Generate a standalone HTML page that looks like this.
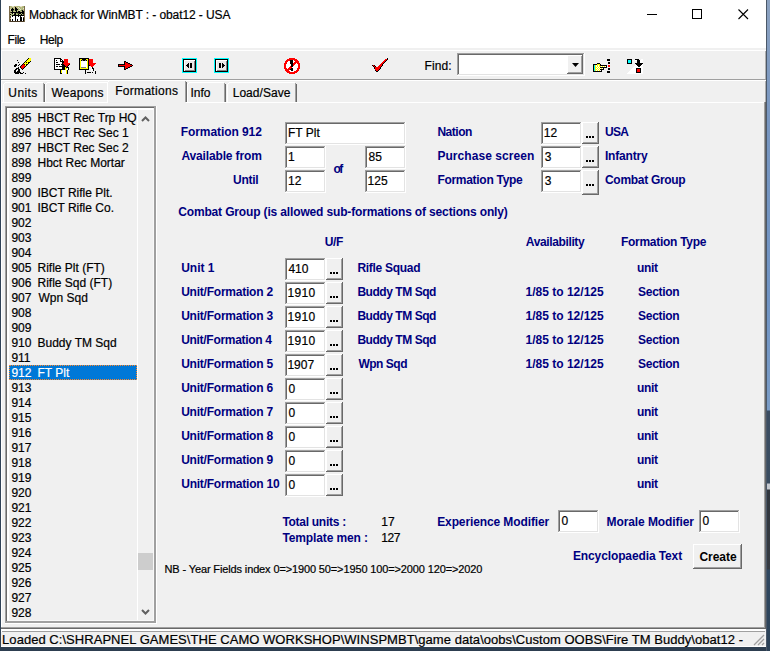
<!DOCTYPE html>
<html><head><meta charset="utf-8"><style>
html,body{margin:0;padding:0;width:770px;height:651px;overflow:hidden;background:#f0f0f0}
#w{position:relative;width:770px;height:651px;overflow:hidden}
#w div, #w span, #w svg{position:absolute}
.t,.b{font-family:"Liberation Sans",sans-serif;font-size:12px;line-height:20px;white-space:pre;color:#000}
.t{-webkit-text-stroke:0.2px currentColor}
.b{-webkit-text-stroke:0}
.b{font-weight:bold;color:#000080}
.k{color:#000}
.w{color:#fff}
.s{font-size:11px}
.st{font-size:13px}
</style></head><body><div id="w">
<div style="left:0px;top:0px;width:770px;height:651px;background:#f0f0f0;"></div>
<div style="left:766px;top:0;width:4px;height:651px;background:linear-gradient(#8ca2c0 0px,#7896c0 120px,#7094c4 300px,#7a9cc6 410px,#3b4d62 411px,#3a4c60 483px,#c5c9d0 484px,#c5c9d0 489px,#30363e 490px,#363b42 569px,#2f4760 570px,#2c4258 651px)"></div>
<div style="left:766px;top:0px;width:1px;height:651px;background:#4b5868;"></div>
<div style="left:0px;top:0px;width:1px;height:651px;background:#2f4257;"></div>
<div style="left:0px;top:647px;width:766px;height:4px;background:#2d3e50;"></div>
<div style="left:1px;top:0px;width:765px;height:48px;background:#ffffff;"></div>
<div style="left:1px;top:48px;width:765px;height:2px;background:#f0f0f0;"></div>
<div style="left:1px;top:50px;width:765px;height:1px;background:#ffffff;"></div>
<div style="left:1px;top:51px;width:1px;height:29px;background:#ffffff;"></div>
<div style="left:1px;top:79px;width:765px;height:1px;background:#a0a0a0;"></div>
<div style="left:1px;top:80px;width:765px;height:1px;background:#ffffff;"></div>
<div style="left:765px;top:51px;width:1px;height:28px;background:#b0b0b0;"></div>
<div style="left:765px;top:81px;width:1px;height:21px;background:#b0b0b0;"></div>
<div style="left:1px;top:81px;width:1px;height:566px;background:#ffffff;"></div>
<div style="left:647px;top:14px;width:10px;height:1px;background:#000;"></div>
<div style="left:692px;top:9px;width:8px;height:8px;border:1px solid #000;background:transparent"></div>
<svg style="position:absolute;left:738px;top:9px" width="11" height="11" viewBox="0 0 11 11"><path d="M0.5 0.5L10 10M10 0.5L0.5 10" stroke="#000" stroke-width="1.1" fill="none"/></svg>
<div style="left:1px;top:102px;width:765px;height:1px;background:#ffffff;"></div>
<div style="left:764px;top:102px;width:1px;height:526px;background:#a0a0a0;"></div>
<div style="left:765px;top:102px;width:1px;height:527px;background:#696969;"></div>
<div style="left:1px;top:627px;width:764px;height:1px;background:#a0a0a0;"></div>
<div style="left:1px;top:628px;width:765px;height:1px;background:#696969;"></div>
<div style="left:4px;top:83px;width:40px;height:19px;background:#f0f0f0;"></div>
<div style="left:5px;top:82px;width:38px;height:1px;background:#ffffff;"></div>
<div style="left:3px;top:84px;width:1px;height:18px;background:#ffffff;"></div>
<div style="left:4px;top:83px;width:1px;height:1px;background:#ffffff;"></div>
<div style="left:43px;top:83px;width:1px;height:19px;background:#a0a0a0;"></div>
<div style="left:44px;top:84px;width:1px;height:18px;background:#696969;"></div>
<div style="left:46px;top:83px;width:62px;height:19px;background:#f0f0f0;"></div>
<div style="left:47px;top:82px;width:60px;height:1px;background:#ffffff;"></div>
<div style="left:45px;top:84px;width:1px;height:18px;background:#ffffff;"></div>
<div style="left:46px;top:83px;width:1px;height:1px;background:#ffffff;"></div>
<div style="left:107px;top:83px;width:1px;height:19px;background:#a0a0a0;"></div>
<div style="left:108px;top:84px;width:1px;height:18px;background:#696969;"></div>
<div style="left:188px;top:83px;width:37px;height:19px;background:#f0f0f0;"></div>
<div style="left:189px;top:82px;width:35px;height:1px;background:#ffffff;"></div>
<div style="left:187px;top:84px;width:1px;height:18px;background:#ffffff;"></div>
<div style="left:188px;top:83px;width:1px;height:1px;background:#ffffff;"></div>
<div style="left:224px;top:83px;width:1px;height:19px;background:#a0a0a0;"></div>
<div style="left:225px;top:84px;width:1px;height:18px;background:#696969;"></div>
<div style="left:228px;top:83px;width:68px;height:19px;background:#f0f0f0;"></div>
<div style="left:229px;top:82px;width:66px;height:1px;background:#ffffff;"></div>
<div style="left:227px;top:84px;width:1px;height:18px;background:#ffffff;"></div>
<div style="left:228px;top:83px;width:1px;height:1px;background:#ffffff;"></div>
<div style="left:295px;top:83px;width:1px;height:19px;background:#a0a0a0;"></div>
<div style="left:296px;top:84px;width:1px;height:18px;background:#696969;"></div>
<div style="left:108px;top:81px;width:78px;height:22px;background:#f0f0f0;"></div>
<div style="left:109px;top:80px;width:75px;height:1px;background:#ffffff;"></div>
<div style="left:107px;top:82px;width:1px;height:21px;background:#ffffff;"></div>
<div style="left:108px;top:81px;width:1px;height:1px;background:#ffffff;"></div>
<div style="left:185px;top:81px;width:1px;height:21px;background:#a0a0a0;"></div>
<div style="left:186px;top:82px;width:1px;height:20px;background:#696969;"></div>
<div style="left:5px;top:106px;width:152px;height:518px;background:#ffffff;"></div>
<div style="left:5px;top:106px;width:151px;height:517px;background:#a0a0a0;"></div>
<div style="left:6px;top:107px;width:150px;height:516px;background:#a0a0a0;"></div>
<div style="left:6px;top:107px;width:148px;height:514px;background:#696969;"></div>
<div style="left:7px;top:108px;width:147px;height:513px;background:#ffffff;"></div>
<div style="left:9px;top:110px;width:144px;height:510px;background:#f0f0f0;"></div>
<div style="left:153px;top:108px;width:1px;height:513px;background:#f8f8f8;"></div>
<div style="left:7px;top:620px;width:147px;height:1px;background:#f8f8f8;"></div>
<div style="left:137px;top:110px;width:1px;height:510px;background:#ffffff;"></div>
<div style="left:138px;top:553px;width:15px;height:17px;background:#cdcdcd;"></div>
<svg style="position:absolute;left:141px;top:115px" width="9" height="7" viewBox="0 0 9 7"><path d="M1 6L4.5 2.5L8 6" stroke="#606060" stroke-width="2" fill="none"/></svg>
<svg style="position:absolute;left:141px;top:609px" width="9" height="7" viewBox="0 0 9 7"><path d="M1 1L4.5 4.5L8 1" stroke="#606060" stroke-width="2" fill="none"/></svg>
<div style="left:9px;top:365px;width:128px;height:15px;background:#0078d7;outline:1px dotted #ff8728;outline-offset:-1px;"></div>
<div style="left:285px;top:122px;width:121px;height:23px;background:#ffffff;"></div>
<div style="left:285px;top:122px;width:120px;height:22px;background:#a0a0a0;"></div>
<div style="left:286px;top:123px;width:119px;height:21px;background:#e3e3e3;"></div>
<div style="left:286px;top:123px;width:118px;height:20px;background:#696969;"></div>
<div style="left:287px;top:124px;width:117px;height:19px;background:#fff;"></div>
<div style="left:285px;top:146px;width:41px;height:23px;background:#ffffff;"></div>
<div style="left:285px;top:146px;width:40px;height:22px;background:#a0a0a0;"></div>
<div style="left:286px;top:147px;width:39px;height:21px;background:#e3e3e3;"></div>
<div style="left:286px;top:147px;width:38px;height:20px;background:#696969;"></div>
<div style="left:287px;top:148px;width:37px;height:19px;background:#fff;"></div>
<div style="left:365px;top:146px;width:41px;height:23px;background:#ffffff;"></div>
<div style="left:365px;top:146px;width:40px;height:22px;background:#a0a0a0;"></div>
<div style="left:366px;top:147px;width:39px;height:21px;background:#e3e3e3;"></div>
<div style="left:366px;top:147px;width:38px;height:20px;background:#696969;"></div>
<div style="left:367px;top:148px;width:37px;height:19px;background:#fff;"></div>
<div style="left:285px;top:170px;width:41px;height:23px;background:#ffffff;"></div>
<div style="left:285px;top:170px;width:40px;height:22px;background:#a0a0a0;"></div>
<div style="left:286px;top:171px;width:39px;height:21px;background:#e3e3e3;"></div>
<div style="left:286px;top:171px;width:38px;height:20px;background:#696969;"></div>
<div style="left:287px;top:172px;width:37px;height:19px;background:#fff;"></div>
<div style="left:365px;top:170px;width:41px;height:23px;background:#ffffff;"></div>
<div style="left:365px;top:170px;width:40px;height:22px;background:#a0a0a0;"></div>
<div style="left:366px;top:171px;width:39px;height:21px;background:#e3e3e3;"></div>
<div style="left:366px;top:171px;width:38px;height:20px;background:#696969;"></div>
<div style="left:367px;top:172px;width:37px;height:19px;background:#fff;"></div>
<div style="left:541px;top:122px;width:41px;height:23px;background:#ffffff;"></div>
<div style="left:541px;top:122px;width:40px;height:22px;background:#a0a0a0;"></div>
<div style="left:542px;top:123px;width:39px;height:21px;background:#e3e3e3;"></div>
<div style="left:542px;top:123px;width:38px;height:20px;background:#696969;"></div>
<div style="left:543px;top:124px;width:37px;height:19px;background:#fff;"></div>
<div style="left:582px;top:122px;width:17px;height:22px;background:#696969;"></div>
<div style="left:582px;top:122px;width:16px;height:21px;background:#ffffff;"></div>
<div style="left:583px;top:123px;width:15px;height:20px;background:#a0a0a0;"></div>
<div style="left:583px;top:123px;width:14px;height:19px;background:#f0f0f0;"></div>
<div style="left:584px;top:124px;width:13px;height:18px;background:#f0f0f0;"></div>
<div style="left:586px;top:136px;width:2px;height:2px;background:#000;"></div>
<div style="left:589px;top:136px;width:2px;height:2px;background:#000;"></div>
<div style="left:592px;top:136px;width:2px;height:2px;background:#000;"></div>
<div style="left:541px;top:146px;width:41px;height:23px;background:#ffffff;"></div>
<div style="left:541px;top:146px;width:40px;height:22px;background:#a0a0a0;"></div>
<div style="left:542px;top:147px;width:39px;height:21px;background:#e3e3e3;"></div>
<div style="left:542px;top:147px;width:38px;height:20px;background:#696969;"></div>
<div style="left:543px;top:148px;width:37px;height:19px;background:#fff;"></div>
<div style="left:582px;top:146px;width:17px;height:22px;background:#696969;"></div>
<div style="left:582px;top:146px;width:16px;height:21px;background:#ffffff;"></div>
<div style="left:583px;top:147px;width:15px;height:20px;background:#a0a0a0;"></div>
<div style="left:583px;top:147px;width:14px;height:19px;background:#f0f0f0;"></div>
<div style="left:584px;top:148px;width:13px;height:18px;background:#f0f0f0;"></div>
<div style="left:586px;top:160px;width:2px;height:2px;background:#000;"></div>
<div style="left:589px;top:160px;width:2px;height:2px;background:#000;"></div>
<div style="left:592px;top:160px;width:2px;height:2px;background:#000;"></div>
<div style="left:541px;top:170px;width:41px;height:23px;background:#ffffff;"></div>
<div style="left:541px;top:170px;width:40px;height:22px;background:#a0a0a0;"></div>
<div style="left:542px;top:171px;width:39px;height:21px;background:#e3e3e3;"></div>
<div style="left:542px;top:171px;width:38px;height:20px;background:#696969;"></div>
<div style="left:543px;top:172px;width:37px;height:19px;background:#fff;"></div>
<div style="left:582px;top:170px;width:17px;height:25px;background:#696969;"></div>
<div style="left:582px;top:170px;width:16px;height:24px;background:#ffffff;"></div>
<div style="left:583px;top:171px;width:15px;height:23px;background:#a0a0a0;"></div>
<div style="left:583px;top:171px;width:14px;height:22px;background:#f0f0f0;"></div>
<div style="left:584px;top:172px;width:13px;height:21px;background:#f0f0f0;"></div>
<div style="left:586px;top:184px;width:2px;height:2px;background:#000;"></div>
<div style="left:589px;top:184px;width:2px;height:2px;background:#000;"></div>
<div style="left:592px;top:184px;width:2px;height:2px;background:#000;"></div>
<div style="left:285px;top:258px;width:41px;height:23px;background:#ffffff;"></div>
<div style="left:285px;top:258px;width:40px;height:22px;background:#a0a0a0;"></div>
<div style="left:286px;top:259px;width:39px;height:21px;background:#e3e3e3;"></div>
<div style="left:286px;top:259px;width:38px;height:20px;background:#696969;"></div>
<div style="left:287px;top:260px;width:37px;height:19px;background:#fff;"></div>
<div style="left:326px;top:258px;width:17px;height:22px;background:#696969;"></div>
<div style="left:326px;top:258px;width:16px;height:21px;background:#ffffff;"></div>
<div style="left:327px;top:259px;width:15px;height:20px;background:#a0a0a0;"></div>
<div style="left:327px;top:259px;width:14px;height:19px;background:#f0f0f0;"></div>
<div style="left:328px;top:260px;width:13px;height:18px;background:#f0f0f0;"></div>
<div style="left:330px;top:272px;width:2px;height:2px;background:#000;"></div>
<div style="left:333px;top:272px;width:2px;height:2px;background:#000;"></div>
<div style="left:336px;top:272px;width:2px;height:2px;background:#000;"></div>
<div style="left:285px;top:282px;width:41px;height:23px;background:#ffffff;"></div>
<div style="left:285px;top:282px;width:40px;height:22px;background:#a0a0a0;"></div>
<div style="left:286px;top:283px;width:39px;height:21px;background:#e3e3e3;"></div>
<div style="left:286px;top:283px;width:38px;height:20px;background:#696969;"></div>
<div style="left:287px;top:284px;width:37px;height:19px;background:#fff;"></div>
<div style="left:326px;top:282px;width:17px;height:22px;background:#696969;"></div>
<div style="left:326px;top:282px;width:16px;height:21px;background:#ffffff;"></div>
<div style="left:327px;top:283px;width:15px;height:20px;background:#a0a0a0;"></div>
<div style="left:327px;top:283px;width:14px;height:19px;background:#f0f0f0;"></div>
<div style="left:328px;top:284px;width:13px;height:18px;background:#f0f0f0;"></div>
<div style="left:330px;top:296px;width:2px;height:2px;background:#000;"></div>
<div style="left:333px;top:296px;width:2px;height:2px;background:#000;"></div>
<div style="left:336px;top:296px;width:2px;height:2px;background:#000;"></div>
<div style="left:285px;top:306px;width:41px;height:23px;background:#ffffff;"></div>
<div style="left:285px;top:306px;width:40px;height:22px;background:#a0a0a0;"></div>
<div style="left:286px;top:307px;width:39px;height:21px;background:#e3e3e3;"></div>
<div style="left:286px;top:307px;width:38px;height:20px;background:#696969;"></div>
<div style="left:287px;top:308px;width:37px;height:19px;background:#fff;"></div>
<div style="left:326px;top:306px;width:17px;height:22px;background:#696969;"></div>
<div style="left:326px;top:306px;width:16px;height:21px;background:#ffffff;"></div>
<div style="left:327px;top:307px;width:15px;height:20px;background:#a0a0a0;"></div>
<div style="left:327px;top:307px;width:14px;height:19px;background:#f0f0f0;"></div>
<div style="left:328px;top:308px;width:13px;height:18px;background:#f0f0f0;"></div>
<div style="left:330px;top:320px;width:2px;height:2px;background:#000;"></div>
<div style="left:333px;top:320px;width:2px;height:2px;background:#000;"></div>
<div style="left:336px;top:320px;width:2px;height:2px;background:#000;"></div>
<div style="left:285px;top:330px;width:41px;height:23px;background:#ffffff;"></div>
<div style="left:285px;top:330px;width:40px;height:22px;background:#a0a0a0;"></div>
<div style="left:286px;top:331px;width:39px;height:21px;background:#e3e3e3;"></div>
<div style="left:286px;top:331px;width:38px;height:20px;background:#696969;"></div>
<div style="left:287px;top:332px;width:37px;height:19px;background:#fff;"></div>
<div style="left:326px;top:330px;width:17px;height:22px;background:#696969;"></div>
<div style="left:326px;top:330px;width:16px;height:21px;background:#ffffff;"></div>
<div style="left:327px;top:331px;width:15px;height:20px;background:#a0a0a0;"></div>
<div style="left:327px;top:331px;width:14px;height:19px;background:#f0f0f0;"></div>
<div style="left:328px;top:332px;width:13px;height:18px;background:#f0f0f0;"></div>
<div style="left:330px;top:344px;width:2px;height:2px;background:#000;"></div>
<div style="left:333px;top:344px;width:2px;height:2px;background:#000;"></div>
<div style="left:336px;top:344px;width:2px;height:2px;background:#000;"></div>
<div style="left:285px;top:354px;width:41px;height:23px;background:#ffffff;"></div>
<div style="left:285px;top:354px;width:40px;height:22px;background:#a0a0a0;"></div>
<div style="left:286px;top:355px;width:39px;height:21px;background:#e3e3e3;"></div>
<div style="left:286px;top:355px;width:38px;height:20px;background:#696969;"></div>
<div style="left:287px;top:356px;width:37px;height:19px;background:#fff;"></div>
<div style="left:326px;top:354px;width:17px;height:22px;background:#696969;"></div>
<div style="left:326px;top:354px;width:16px;height:21px;background:#ffffff;"></div>
<div style="left:327px;top:355px;width:15px;height:20px;background:#a0a0a0;"></div>
<div style="left:327px;top:355px;width:14px;height:19px;background:#f0f0f0;"></div>
<div style="left:328px;top:356px;width:13px;height:18px;background:#f0f0f0;"></div>
<div style="left:330px;top:368px;width:2px;height:2px;background:#000;"></div>
<div style="left:333px;top:368px;width:2px;height:2px;background:#000;"></div>
<div style="left:336px;top:368px;width:2px;height:2px;background:#000;"></div>
<div style="left:285px;top:378px;width:41px;height:23px;background:#ffffff;"></div>
<div style="left:285px;top:378px;width:40px;height:22px;background:#a0a0a0;"></div>
<div style="left:286px;top:379px;width:39px;height:21px;background:#e3e3e3;"></div>
<div style="left:286px;top:379px;width:38px;height:20px;background:#696969;"></div>
<div style="left:287px;top:380px;width:37px;height:19px;background:#fff;"></div>
<div style="left:326px;top:378px;width:17px;height:22px;background:#696969;"></div>
<div style="left:326px;top:378px;width:16px;height:21px;background:#ffffff;"></div>
<div style="left:327px;top:379px;width:15px;height:20px;background:#a0a0a0;"></div>
<div style="left:327px;top:379px;width:14px;height:19px;background:#f0f0f0;"></div>
<div style="left:328px;top:380px;width:13px;height:18px;background:#f0f0f0;"></div>
<div style="left:330px;top:392px;width:2px;height:2px;background:#000;"></div>
<div style="left:333px;top:392px;width:2px;height:2px;background:#000;"></div>
<div style="left:336px;top:392px;width:2px;height:2px;background:#000;"></div>
<div style="left:285px;top:402px;width:41px;height:23px;background:#ffffff;"></div>
<div style="left:285px;top:402px;width:40px;height:22px;background:#a0a0a0;"></div>
<div style="left:286px;top:403px;width:39px;height:21px;background:#e3e3e3;"></div>
<div style="left:286px;top:403px;width:38px;height:20px;background:#696969;"></div>
<div style="left:287px;top:404px;width:37px;height:19px;background:#fff;"></div>
<div style="left:326px;top:402px;width:17px;height:22px;background:#696969;"></div>
<div style="left:326px;top:402px;width:16px;height:21px;background:#ffffff;"></div>
<div style="left:327px;top:403px;width:15px;height:20px;background:#a0a0a0;"></div>
<div style="left:327px;top:403px;width:14px;height:19px;background:#f0f0f0;"></div>
<div style="left:328px;top:404px;width:13px;height:18px;background:#f0f0f0;"></div>
<div style="left:330px;top:416px;width:2px;height:2px;background:#000;"></div>
<div style="left:333px;top:416px;width:2px;height:2px;background:#000;"></div>
<div style="left:336px;top:416px;width:2px;height:2px;background:#000;"></div>
<div style="left:285px;top:426px;width:41px;height:23px;background:#ffffff;"></div>
<div style="left:285px;top:426px;width:40px;height:22px;background:#a0a0a0;"></div>
<div style="left:286px;top:427px;width:39px;height:21px;background:#e3e3e3;"></div>
<div style="left:286px;top:427px;width:38px;height:20px;background:#696969;"></div>
<div style="left:287px;top:428px;width:37px;height:19px;background:#fff;"></div>
<div style="left:326px;top:426px;width:17px;height:22px;background:#696969;"></div>
<div style="left:326px;top:426px;width:16px;height:21px;background:#ffffff;"></div>
<div style="left:327px;top:427px;width:15px;height:20px;background:#a0a0a0;"></div>
<div style="left:327px;top:427px;width:14px;height:19px;background:#f0f0f0;"></div>
<div style="left:328px;top:428px;width:13px;height:18px;background:#f0f0f0;"></div>
<div style="left:330px;top:440px;width:2px;height:2px;background:#000;"></div>
<div style="left:333px;top:440px;width:2px;height:2px;background:#000;"></div>
<div style="left:336px;top:440px;width:2px;height:2px;background:#000;"></div>
<div style="left:285px;top:450px;width:41px;height:23px;background:#ffffff;"></div>
<div style="left:285px;top:450px;width:40px;height:22px;background:#a0a0a0;"></div>
<div style="left:286px;top:451px;width:39px;height:21px;background:#e3e3e3;"></div>
<div style="left:286px;top:451px;width:38px;height:20px;background:#696969;"></div>
<div style="left:287px;top:452px;width:37px;height:19px;background:#fff;"></div>
<div style="left:326px;top:450px;width:17px;height:22px;background:#696969;"></div>
<div style="left:326px;top:450px;width:16px;height:21px;background:#ffffff;"></div>
<div style="left:327px;top:451px;width:15px;height:20px;background:#a0a0a0;"></div>
<div style="left:327px;top:451px;width:14px;height:19px;background:#f0f0f0;"></div>
<div style="left:328px;top:452px;width:13px;height:18px;background:#f0f0f0;"></div>
<div style="left:330px;top:464px;width:2px;height:2px;background:#000;"></div>
<div style="left:333px;top:464px;width:2px;height:2px;background:#000;"></div>
<div style="left:336px;top:464px;width:2px;height:2px;background:#000;"></div>
<div style="left:285px;top:474px;width:41px;height:23px;background:#ffffff;"></div>
<div style="left:285px;top:474px;width:40px;height:22px;background:#a0a0a0;"></div>
<div style="left:286px;top:475px;width:39px;height:21px;background:#e3e3e3;"></div>
<div style="left:286px;top:475px;width:38px;height:20px;background:#696969;"></div>
<div style="left:287px;top:476px;width:37px;height:19px;background:#fff;"></div>
<div style="left:326px;top:474px;width:17px;height:22px;background:#696969;"></div>
<div style="left:326px;top:474px;width:16px;height:21px;background:#ffffff;"></div>
<div style="left:327px;top:475px;width:15px;height:20px;background:#a0a0a0;"></div>
<div style="left:327px;top:475px;width:14px;height:19px;background:#f0f0f0;"></div>
<div style="left:328px;top:476px;width:13px;height:18px;background:#f0f0f0;"></div>
<div style="left:330px;top:488px;width:2px;height:2px;background:#000;"></div>
<div style="left:333px;top:488px;width:2px;height:2px;background:#000;"></div>
<div style="left:336px;top:488px;width:2px;height:2px;background:#000;"></div>
<div style="left:558px;top:510px;width:41px;height:23px;background:#ffffff;"></div>
<div style="left:558px;top:510px;width:40px;height:22px;background:#a0a0a0;"></div>
<div style="left:559px;top:511px;width:39px;height:21px;background:#e3e3e3;"></div>
<div style="left:559px;top:511px;width:38px;height:20px;background:#696969;"></div>
<div style="left:560px;top:512px;width:37px;height:19px;background:#fff;"></div>
<div style="left:699px;top:510px;width:41px;height:23px;background:#ffffff;"></div>
<div style="left:699px;top:510px;width:40px;height:22px;background:#a0a0a0;"></div>
<div style="left:700px;top:511px;width:39px;height:21px;background:#e3e3e3;"></div>
<div style="left:700px;top:511px;width:38px;height:20px;background:#696969;"></div>
<div style="left:701px;top:512px;width:37px;height:19px;background:#fff;"></div>
<div style="left:693px;top:544px;width:49px;height:25px;background:#696969;"></div>
<div style="left:693px;top:544px;width:48px;height:24px;background:#ffffff;"></div>
<div style="left:694px;top:545px;width:47px;height:23px;background:#a0a0a0;"></div>
<div style="left:694px;top:545px;width:46px;height:22px;background:#f0f0f0;"></div>
<div style="left:695px;top:546px;width:45px;height:21px;background:#f0f0f0;"></div>
<div style="left:457px;top:53px;width:128px;height:23px;background:#ffffff;"></div>
<div style="left:457px;top:53px;width:127px;height:22px;background:#a0a0a0;"></div>
<div style="left:458px;top:54px;width:126px;height:21px;background:#e3e3e3;"></div>
<div style="left:458px;top:54px;width:125px;height:20px;background:#696969;"></div>
<div style="left:459px;top:55px;width:124px;height:19px;background:#fff;"></div>
<div style="left:567px;top:55px;width:16px;height:19px;background:#696969;"></div>
<div style="left:567px;top:55px;width:15px;height:18px;background:#ffffff;"></div>
<div style="left:568px;top:56px;width:14px;height:17px;background:#a0a0a0;"></div>
<div style="left:568px;top:56px;width:13px;height:16px;background:#f0f0f0;"></div>
<div style="left:569px;top:57px;width:12px;height:15px;background:#f0f0f0;"></div>
<svg style="position:absolute;left:572px;top:63px" width="7" height="4" viewBox="0 0 7 4"><path d="M0 0H7L3.5 4Z" fill="#000"/></svg>
<div style="left:2px;top:629px;width:763px;height:2px;background:#ffffff;"></div>
<div style="left:2px;top:631px;width:763px;height:1px;background:#a0a0a0;"></div>
<div style="left:1px;top:632px;width:764px;height:14px;background:#f0f0f0;"></div>
<div style="left:1px;top:646px;width:765px;height:1px;background:#ffffff;"></div>
<svg style="position:absolute;left:752px;top:634px" width="13" height="12" viewBox="0 0 13 12"><path d="M12 1L2 11M12 5L6 11M12 9L10 11" stroke="#a0a0a0" stroke-width="1.3"/></svg>
<svg style="left:12px;top:56px" width="20" height="20" viewBox="0 0 20 20" shape-rendering="crispEdges"><rect x="16" y="2" width="1" height="1" fill="#000000"/><rect x="17" y="2" width="2" height="1" fill="#ffff00"/><rect x="15" y="3" width="1" height="1" fill="#000000"/><rect x="16" y="3" width="3" height="1" fill="#ffff00"/><rect x="5" y="4" width="1" height="1" fill="#000000"/><rect x="14" y="4" width="1" height="1" fill="#000000"/><rect x="15" y="4" width="4" height="1" fill="#ffff00"/><rect x="13" y="5" width="1" height="1" fill="#000000"/><rect x="14" y="5" width="4" height="1" fill="#ffff00"/><rect x="18" y="5" width="1" height="1" fill="#000000"/><rect x="6" y="6" width="1" height="1" fill="#000000"/><rect x="12" y="6" width="1" height="1" fill="#000000"/><rect x="13" y="6" width="1" height="1" fill="#ffff00"/><rect x="14" y="6" width="1" height="1" fill="#000000"/><rect x="15" y="6" width="1" height="1" fill="#ffff00"/><rect x="16" y="6" width="2" height="1" fill="#000000"/><rect x="11" y="7" width="1" height="1" fill="#000000"/><rect x="12" y="7" width="4" height="1" fill="#ffff00"/><rect x="16" y="7" width="1" height="1" fill="#000000"/><rect x="3" y="8" width="2" height="1" fill="#000000"/><rect x="7" y="8" width="1" height="1" fill="#000000"/><rect x="10" y="8" width="1" height="1" fill="#000000"/><rect x="11" y="8" width="1" height="1" fill="#ff0000"/><rect x="12" y="8" width="1" height="1" fill="#000000"/><rect x="13" y="8" width="1" height="1" fill="#ffff00"/><rect x="14" y="8" width="2" height="1" fill="#000000"/><rect x="2" y="9" width="3" height="1" fill="#000000"/><rect x="6" y="9" width="1" height="1" fill="#000000"/><rect x="9" y="9" width="1" height="1" fill="#000000"/><rect x="10" y="9" width="3" height="1" fill="#ff0000"/><rect x="13" y="9" width="1" height="1" fill="#ffff00"/><rect x="14" y="9" width="1" height="1" fill="#000000"/><rect x="2" y="10" width="2" height="1" fill="#000000"/><rect x="8" y="10" width="1" height="1" fill="#000000"/><rect x="9" y="10" width="4" height="1" fill="#ff0000"/><rect x="13" y="10" width="1" height="1" fill="#000000"/><rect x="6" y="11" width="1" height="1" fill="#000000"/><rect x="8" y="11" width="1" height="1" fill="#000000"/><rect x="9" y="11" width="3" height="1" fill="#ff0000"/><rect x="12" y="11" width="1" height="1" fill="#000000"/><rect x="4" y="12" width="3" height="1" fill="#000000"/><rect x="9" y="12" width="1" height="1" fill="#000000"/><rect x="10" y="12" width="1" height="1" fill="#ff0000"/><rect x="11" y="12" width="1" height="1" fill="#000000"/><rect x="3" y="13" width="2" height="1" fill="#000000"/><rect x="6" y="13" width="2" height="1" fill="#000000"/><rect x="10" y="13" width="1" height="1" fill="#000000"/><rect x="2" y="14" width="2" height="1" fill="#000000"/><rect x="6" y="14" width="2" height="1" fill="#000000"/><rect x="2" y="15" width="2" height="1" fill="#000000"/><rect x="5" y="15" width="3" height="1" fill="#000000"/><rect x="2" y="16" width="7" height="1" fill="#000000"/><rect x="11" y="16" width="1" height="1" fill="#000000"/><rect x="3" y="17" width="4" height="1" fill="#000000"/><rect x="8" y="17" width="3" height="1" fill="#000000"/><rect x="13" y="17" width="1" height="1" fill="#000000"/></svg>
<svg style="left:52px;top:56px" width="20" height="18" viewBox="0 0 20 18" shape-rendering="crispEdges"><rect x="2" y="2" width="7" height="1" fill="#000000"/><rect x="2" y="3" width="1" height="1" fill="#000000"/><rect x="3" y="3" width="5" height="1" fill="#ffffff"/><rect x="8" y="3" width="2" height="1" fill="#000000"/><rect x="12" y="3" width="4" height="1" fill="#ff0000"/><rect x="2" y="4" width="1" height="1" fill="#000000"/><rect x="3" y="4" width="1" height="1" fill="#ffffff"/><rect x="4" y="4" width="1" height="1" fill="#000000"/><rect x="5" y="4" width="3" height="1" fill="#ffffff"/><rect x="8" y="4" width="1" height="1" fill="#000000"/><rect x="9" y="4" width="1" height="1" fill="#ffffff"/><rect x="10" y="4" width="1" height="1" fill="#000000"/><rect x="12" y="4" width="4" height="1" fill="#ff0000"/><rect x="2" y="5" width="1" height="1" fill="#000000"/><rect x="3" y="5" width="5" height="1" fill="#ffffff"/><rect x="8" y="5" width="4" height="1" fill="#000000"/><rect x="12" y="5" width="4" height="1" fill="#ff0000"/><rect x="2" y="6" width="1" height="1" fill="#000000"/><rect x="3" y="6" width="1" height="1" fill="#ffffff"/><rect x="4" y="6" width="2" height="1" fill="#000000"/><rect x="6" y="6" width="4" height="1" fill="#ffffff"/><rect x="10" y="6" width="2" height="1" fill="#000000"/><rect x="12" y="6" width="4" height="1" fill="#ff0000"/><rect x="2" y="7" width="1" height="1" fill="#000000"/><rect x="3" y="7" width="7" height="1" fill="#ffffff"/><rect x="10" y="7" width="1" height="1" fill="#000000"/><rect x="11" y="7" width="7" height="1" fill="#ff0000"/><rect x="2" y="8" width="1" height="1" fill="#000000"/><rect x="3" y="8" width="1" height="1" fill="#ffffff"/><rect x="4" y="8" width="4" height="1" fill="#000000"/><rect x="8" y="8" width="1" height="1" fill="#ffffff"/><rect x="9" y="8" width="3" height="1" fill="#000000"/><rect x="12" y="8" width="5" height="1" fill="#ff0000"/><rect x="17" y="8" width="1" height="1" fill="#000000"/><rect x="2" y="9" width="1" height="1" fill="#000000"/><rect x="3" y="9" width="7" height="1" fill="#ffffff"/><rect x="10" y="9" width="3" height="1" fill="#000000"/><rect x="13" y="9" width="3" height="1" fill="#ff0000"/><rect x="16" y="9" width="1" height="1" fill="#000000"/><rect x="2" y="10" width="1" height="1" fill="#000000"/><rect x="3" y="10" width="1" height="1" fill="#ffffff"/><rect x="4" y="10" width="2" height="1" fill="#000000"/><rect x="6" y="10" width="1" height="1" fill="#ffffff"/><rect x="7" y="10" width="7" height="1" fill="#000000"/><rect x="14" y="10" width="1" height="1" fill="#ff0000"/><rect x="15" y="10" width="1" height="1" fill="#000000"/><rect x="2" y="11" width="1" height="1" fill="#000000"/><rect x="3" y="11" width="7" height="1" fill="#ffffff"/><rect x="10" y="11" width="3" height="1" fill="#000000"/><rect x="13" y="11" width="1" height="1" fill="#ffff00"/><rect x="14" y="11" width="3" height="1" fill="#000000"/><rect x="2" y="12" width="1" height="1" fill="#000000"/><rect x="3" y="12" width="7" height="1" fill="#ffffff"/><rect x="10" y="12" width="3" height="1" fill="#000000"/><rect x="13" y="12" width="2" height="1" fill="#ffff00"/><rect x="15" y="12" width="1" height="1" fill="#ffffff"/><rect x="16" y="12" width="1" height="1" fill="#000000"/><rect x="2" y="13" width="11" height="1" fill="#000000"/><rect x="13" y="13" width="1" height="1" fill="#ffff00"/><rect x="14" y="13" width="2" height="1" fill="#ffffff"/><rect x="16" y="13" width="1" height="1" fill="#000000"/><rect x="8" y="14" width="1" height="1" fill="#000000"/><rect x="9" y="14" width="1" height="1" fill="#ffff00"/><rect x="10" y="14" width="4" height="1" fill="#ffffff"/><rect x="14" y="14" width="1" height="1" fill="#ffff00"/><rect x="15" y="14" width="1" height="1" fill="#000000"/><rect x="8" y="15" width="1" height="1" fill="#000000"/><rect x="9" y="15" width="1" height="1" fill="#ffff00"/><rect x="10" y="15" width="4" height="1" fill="#ffffff"/><rect x="14" y="15" width="1" height="1" fill="#ffff00"/><rect x="15" y="15" width="1" height="1" fill="#000000"/><rect x="8" y="16" width="1" height="1" fill="#000000"/><rect x="9" y="16" width="1" height="1" fill="#ffff00"/><rect x="10" y="16" width="4" height="1" fill="#ffffff"/><rect x="14" y="16" width="1" height="1" fill="#ffff00"/><rect x="15" y="16" width="1" height="1" fill="#000000"/><rect x="8" y="17" width="2" height="1" fill="#000000"/><rect x="10" y="17" width="4" height="1" fill="#ffffff"/><rect x="14" y="17" width="1" height="1" fill="#ffff00"/><rect x="15" y="17" width="1" height="1" fill="#000000"/></svg>
<svg style="left:77px;top:56px" width="20" height="18" viewBox="0 0 20 18" shape-rendering="crispEdges"><rect x="2" y="2" width="10" height="1" fill="#000000"/><rect x="2" y="3" width="1" height="1" fill="#000000"/><rect x="3" y="3" width="2" height="1" fill="#ffff00"/><rect x="5" y="3" width="4" height="1" fill="#000000"/><rect x="9" y="3" width="2" height="1" fill="#ffff00"/><rect x="11" y="3" width="1" height="1" fill="#000000"/><rect x="12" y="3" width="4" height="1" fill="#ff0000"/><rect x="2" y="4" width="1" height="1" fill="#000000"/><rect x="3" y="4" width="1" height="1" fill="#ffff00"/><rect x="4" y="4" width="1" height="1" fill="#000000"/><rect x="5" y="4" width="1" height="1" fill="#808080"/><rect x="6" y="4" width="2" height="1" fill="#000000"/><rect x="8" y="4" width="1" height="1" fill="#808080"/><rect x="9" y="4" width="1" height="1" fill="#000000"/><rect x="10" y="4" width="1" height="1" fill="#ffff00"/><rect x="11" y="4" width="1" height="1" fill="#000000"/><rect x="12" y="4" width="4" height="1" fill="#ff0000"/><rect x="2" y="5" width="1" height="1" fill="#000000"/><rect x="3" y="5" width="1" height="1" fill="#ffff00"/><rect x="4" y="5" width="6" height="1" fill="#ffffff"/><rect x="10" y="5" width="1" height="1" fill="#ffff00"/><rect x="11" y="5" width="1" height="1" fill="#000000"/><rect x="12" y="5" width="4" height="1" fill="#ff0000"/><rect x="2" y="6" width="1" height="1" fill="#000000"/><rect x="3" y="6" width="1" height="1" fill="#ffff00"/><rect x="4" y="6" width="6" height="1" fill="#ffffff"/><rect x="10" y="6" width="1" height="1" fill="#ffff00"/><rect x="11" y="6" width="1" height="1" fill="#000000"/><rect x="12" y="6" width="4" height="1" fill="#ff0000"/><rect x="2" y="7" width="1" height="1" fill="#000000"/><rect x="3" y="7" width="1" height="1" fill="#ffff00"/><rect x="4" y="7" width="6" height="1" fill="#ffffff"/><rect x="10" y="7" width="1" height="1" fill="#ffff00"/><rect x="11" y="7" width="1" height="1" fill="#000000"/><rect x="12" y="7" width="7" height="1" fill="#ff0000"/><rect x="2" y="8" width="1" height="1" fill="#000000"/><rect x="3" y="8" width="1" height="1" fill="#ffff00"/><rect x="4" y="8" width="6" height="1" fill="#ffffff"/><rect x="10" y="8" width="1" height="1" fill="#ffff00"/><rect x="11" y="8" width="1" height="1" fill="#000000"/><rect x="12" y="8" width="6" height="1" fill="#ff0000"/><rect x="2" y="9" width="1" height="1" fill="#000000"/><rect x="3" y="9" width="1" height="1" fill="#ffff00"/><rect x="4" y="9" width="6" height="1" fill="#ffffff"/><rect x="10" y="9" width="1" height="1" fill="#ffff00"/><rect x="11" y="9" width="2" height="1" fill="#000000"/><rect x="13" y="9" width="4" height="1" fill="#ff0000"/><rect x="2" y="10" width="1" height="1" fill="#000000"/><rect x="3" y="10" width="1" height="1" fill="#ffff00"/><rect x="4" y="10" width="6" height="1" fill="#ffffff"/><rect x="10" y="10" width="1" height="1" fill="#ffff00"/><rect x="11" y="10" width="1" height="1" fill="#000000"/><rect x="14" y="10" width="2" height="1" fill="#ff0000"/><rect x="2" y="11" width="1" height="1" fill="#000000"/><rect x="3" y="11" width="1" height="1" fill="#ffff00"/><rect x="4" y="11" width="5" height="1" fill="#808080"/><rect x="9" y="11" width="1" height="1" fill="#ffffff"/><rect x="10" y="11" width="1" height="1" fill="#ffff00"/><rect x="11" y="11" width="1" height="1" fill="#000000"/><rect x="14" y="11" width="1" height="1" fill="#ffffff"/><rect x="15" y="11" width="1" height="1" fill="#000000"/><rect x="2" y="12" width="1" height="1" fill="#000000"/><rect x="3" y="12" width="8" height="1" fill="#ffff00"/><rect x="11" y="12" width="1" height="1" fill="#000000"/><rect x="14" y="12" width="1" height="1" fill="#ffffff"/><rect x="15" y="12" width="2" height="1" fill="#000000"/><rect x="2" y="13" width="10" height="1" fill="#000000"/><rect x="14" y="13" width="2" height="1" fill="#ffffff"/><rect x="16" y="13" width="1" height="1" fill="#000000"/><rect x="8" y="14" width="1" height="1" fill="#000000"/><rect x="14" y="14" width="2" height="1" fill="#ffffff"/><rect x="16" y="14" width="1" height="1" fill="#000000"/><rect x="8" y="15" width="1" height="1" fill="#000000"/><rect x="18" y="15" width="1" height="1" fill="#000000"/><rect x="8" y="16" width="1" height="1" fill="#000000"/><rect x="10" y="16" width="4" height="1" fill="#000000"/><rect x="15" y="16" width="1" height="1" fill="#000000"/><rect x="18" y="16" width="1" height="1" fill="#000000"/><rect x="8" y="17" width="1" height="1" fill="#000000"/><rect x="18" y="17" width="1" height="1" fill="#000000"/></svg>
<svg style="left:114px;top:56px" width="20" height="14" viewBox="0 0 20 14" shape-rendering="crispEdges"><rect x="10" y="5" width="2" height="1" fill="#000000"/><rect x="10" y="6" width="1" height="1" fill="#000000"/><rect x="11" y="6" width="1" height="1" fill="#ff0000"/><rect x="12" y="6" width="2" height="1" fill="#000000"/><rect x="10" y="7" width="1" height="1" fill="#000000"/><rect x="11" y="7" width="3" height="1" fill="#ff0000"/><rect x="14" y="7" width="2" height="1" fill="#000000"/><rect x="4" y="8" width="7" height="1" fill="#000000"/><rect x="11" y="8" width="5" height="1" fill="#ff0000"/><rect x="16" y="8" width="2" height="1" fill="#000000"/><rect x="4" y="9" width="1" height="1" fill="#000000"/><rect x="5" y="9" width="13" height="1" fill="#ff0000"/><rect x="18" y="9" width="1" height="1" fill="#000000"/><rect x="4" y="10" width="7" height="1" fill="#000000"/><rect x="11" y="10" width="5" height="1" fill="#ff0000"/><rect x="16" y="10" width="2" height="1" fill="#000000"/><rect x="10" y="11" width="1" height="1" fill="#000000"/><rect x="11" y="11" width="3" height="1" fill="#ff0000"/><rect x="14" y="11" width="2" height="1" fill="#000000"/><rect x="10" y="12" width="1" height="1" fill="#000000"/><rect x="11" y="12" width="1" height="1" fill="#ff0000"/><rect x="12" y="12" width="2" height="1" fill="#000000"/><rect x="10" y="13" width="2" height="1" fill="#000000"/></svg>
<svg style="left:182px;top:58px" width="15" height="15" viewBox="0 0 15 15" shape-rendering="crispEdges"><rect x="0" y="0" width="15" height="1" fill="#00ffff"/><rect x="0" y="1" width="1" height="1" fill="#00ffff"/><rect x="1" y="1" width="13" height="1" fill="#000000"/><rect x="14" y="1" width="1" height="1" fill="#00ffff"/><rect x="0" y="2" width="1" height="1" fill="#00ffff"/><rect x="1" y="2" width="1" height="1" fill="#000000"/><rect x="2" y="2" width="11" height="1" fill="#ffffff"/><rect x="13" y="2" width="1" height="1" fill="#000000"/><rect x="14" y="2" width="1" height="1" fill="#00ffff"/><rect x="0" y="3" width="1" height="1" fill="#00ffff"/><rect x="1" y="3" width="1" height="1" fill="#000000"/><rect x="2" y="3" width="1" height="1" fill="#ffffff"/><rect x="3" y="3" width="9" height="1" fill="#e8e8e8"/><rect x="12" y="3" width="1" height="1" fill="#808080"/><rect x="13" y="3" width="1" height="1" fill="#000000"/><rect x="14" y="3" width="1" height="1" fill="#00ffff"/><rect x="0" y="4" width="1" height="1" fill="#00ffff"/><rect x="1" y="4" width="1" height="1" fill="#000000"/><rect x="2" y="4" width="1" height="1" fill="#ffffff"/><rect x="3" y="4" width="9" height="1" fill="#e8e8e8"/><rect x="12" y="4" width="1" height="1" fill="#808080"/><rect x="13" y="4" width="1" height="1" fill="#000000"/><rect x="14" y="4" width="1" height="1" fill="#00ffff"/><rect x="0" y="5" width="1" height="1" fill="#00ffff"/><rect x="1" y="5" width="1" height="1" fill="#000000"/><rect x="2" y="5" width="1" height="1" fill="#ffffff"/><rect x="3" y="5" width="3" height="1" fill="#e8e8e8"/><rect x="6" y="5" width="1" height="1" fill="#000000"/><rect x="7" y="5" width="1" height="1" fill="#e8e8e8"/><rect x="8" y="5" width="2" height="1" fill="#000000"/><rect x="10" y="5" width="2" height="1" fill="#e8e8e8"/><rect x="12" y="5" width="1" height="1" fill="#808080"/><rect x="13" y="5" width="1" height="1" fill="#000000"/><rect x="14" y="5" width="1" height="1" fill="#00ffff"/><rect x="0" y="6" width="1" height="1" fill="#00ffff"/><rect x="1" y="6" width="1" height="1" fill="#000000"/><rect x="2" y="6" width="1" height="1" fill="#ffffff"/><rect x="3" y="6" width="2" height="1" fill="#e8e8e8"/><rect x="5" y="6" width="2" height="1" fill="#000000"/><rect x="7" y="6" width="1" height="1" fill="#e8e8e8"/><rect x="8" y="6" width="2" height="1" fill="#000000"/><rect x="10" y="6" width="2" height="1" fill="#e8e8e8"/><rect x="12" y="6" width="1" height="1" fill="#808080"/><rect x="13" y="6" width="1" height="1" fill="#000000"/><rect x="14" y="6" width="1" height="1" fill="#00ffff"/><rect x="0" y="7" width="1" height="1" fill="#00ffff"/><rect x="1" y="7" width="1" height="1" fill="#000000"/><rect x="2" y="7" width="1" height="1" fill="#ffffff"/><rect x="3" y="7" width="1" height="1" fill="#e8e8e8"/><rect x="4" y="7" width="3" height="1" fill="#000000"/><rect x="7" y="7" width="1" height="1" fill="#e8e8e8"/><rect x="8" y="7" width="2" height="1" fill="#000000"/><rect x="10" y="7" width="2" height="1" fill="#e8e8e8"/><rect x="12" y="7" width="1" height="1" fill="#808080"/><rect x="13" y="7" width="1" height="1" fill="#000000"/><rect x="14" y="7" width="1" height="1" fill="#00ffff"/><rect x="0" y="8" width="1" height="1" fill="#00ffff"/><rect x="1" y="8" width="1" height="1" fill="#000000"/><rect x="2" y="8" width="1" height="1" fill="#ffffff"/><rect x="3" y="8" width="2" height="1" fill="#e8e8e8"/><rect x="5" y="8" width="2" height="1" fill="#000000"/><rect x="7" y="8" width="1" height="1" fill="#e8e8e8"/><rect x="8" y="8" width="2" height="1" fill="#000000"/><rect x="10" y="8" width="2" height="1" fill="#e8e8e8"/><rect x="12" y="8" width="1" height="1" fill="#808080"/><rect x="13" y="8" width="1" height="1" fill="#000000"/><rect x="14" y="8" width="1" height="1" fill="#00ffff"/><rect x="0" y="9" width="1" height="1" fill="#00ffff"/><rect x="1" y="9" width="1" height="1" fill="#000000"/><rect x="2" y="9" width="1" height="1" fill="#ffffff"/><rect x="3" y="9" width="3" height="1" fill="#e8e8e8"/><rect x="6" y="9" width="1" height="1" fill="#000000"/><rect x="7" y="9" width="1" height="1" fill="#e8e8e8"/><rect x="8" y="9" width="2" height="1" fill="#000000"/><rect x="10" y="9" width="2" height="1" fill="#e8e8e8"/><rect x="12" y="9" width="1" height="1" fill="#808080"/><rect x="13" y="9" width="1" height="1" fill="#000000"/><rect x="14" y="9" width="1" height="1" fill="#00ffff"/><rect x="0" y="10" width="1" height="1" fill="#00ffff"/><rect x="1" y="10" width="1" height="1" fill="#000000"/><rect x="2" y="10" width="1" height="1" fill="#ffffff"/><rect x="3" y="10" width="9" height="1" fill="#e8e8e8"/><rect x="12" y="10" width="1" height="1" fill="#808080"/><rect x="13" y="10" width="1" height="1" fill="#000000"/><rect x="14" y="10" width="1" height="1" fill="#00ffff"/><rect x="0" y="11" width="1" height="1" fill="#00ffff"/><rect x="1" y="11" width="1" height="1" fill="#000000"/><rect x="2" y="11" width="1" height="1" fill="#ffffff"/><rect x="3" y="11" width="9" height="1" fill="#e8e8e8"/><rect x="12" y="11" width="1" height="1" fill="#808080"/><rect x="13" y="11" width="1" height="1" fill="#000000"/><rect x="14" y="11" width="1" height="1" fill="#00ffff"/><rect x="0" y="12" width="1" height="1" fill="#00ffff"/><rect x="1" y="12" width="1" height="1" fill="#000000"/><rect x="2" y="12" width="1" height="1" fill="#ffffff"/><rect x="3" y="12" width="10" height="1" fill="#808080"/><rect x="13" y="12" width="1" height="1" fill="#000000"/><rect x="14" y="12" width="1" height="1" fill="#00ffff"/><rect x="0" y="13" width="1" height="1" fill="#00ffff"/><rect x="1" y="13" width="13" height="1" fill="#000000"/><rect x="14" y="13" width="1" height="1" fill="#00ffff"/><rect x="0" y="14" width="15" height="1" fill="#00ffff"/></svg>
<svg style="left:214px;top:58px" width="15" height="15" viewBox="0 0 15 15" shape-rendering="crispEdges"><rect x="0" y="0" width="15" height="1" fill="#00ffff"/><rect x="0" y="1" width="1" height="1" fill="#00ffff"/><rect x="1" y="1" width="13" height="1" fill="#000000"/><rect x="14" y="1" width="1" height="1" fill="#00ffff"/><rect x="0" y="2" width="1" height="1" fill="#00ffff"/><rect x="1" y="2" width="1" height="1" fill="#000000"/><rect x="2" y="2" width="11" height="1" fill="#ffffff"/><rect x="13" y="2" width="1" height="1" fill="#000000"/><rect x="14" y="2" width="1" height="1" fill="#00ffff"/><rect x="0" y="3" width="1" height="1" fill="#00ffff"/><rect x="1" y="3" width="1" height="1" fill="#000000"/><rect x="2" y="3" width="1" height="1" fill="#ffffff"/><rect x="3" y="3" width="9" height="1" fill="#e8e8e8"/><rect x="12" y="3" width="1" height="1" fill="#808080"/><rect x="13" y="3" width="1" height="1" fill="#000000"/><rect x="14" y="3" width="1" height="1" fill="#00ffff"/><rect x="0" y="4" width="1" height="1" fill="#00ffff"/><rect x="1" y="4" width="1" height="1" fill="#000000"/><rect x="2" y="4" width="1" height="1" fill="#ffffff"/><rect x="3" y="4" width="9" height="1" fill="#e8e8e8"/><rect x="12" y="4" width="1" height="1" fill="#808080"/><rect x="13" y="4" width="1" height="1" fill="#000000"/><rect x="14" y="4" width="1" height="1" fill="#00ffff"/><rect x="0" y="5" width="1" height="1" fill="#00ffff"/><rect x="1" y="5" width="1" height="1" fill="#000000"/><rect x="2" y="5" width="1" height="1" fill="#ffffff"/><rect x="3" y="5" width="2" height="1" fill="#e8e8e8"/><rect x="5" y="5" width="2" height="1" fill="#000000"/><rect x="7" y="5" width="1" height="1" fill="#e8e8e8"/><rect x="8" y="5" width="1" height="1" fill="#000000"/><rect x="9" y="5" width="3" height="1" fill="#e8e8e8"/><rect x="12" y="5" width="1" height="1" fill="#808080"/><rect x="13" y="5" width="1" height="1" fill="#000000"/><rect x="14" y="5" width="1" height="1" fill="#00ffff"/><rect x="0" y="6" width="1" height="1" fill="#00ffff"/><rect x="1" y="6" width="1" height="1" fill="#000000"/><rect x="2" y="6" width="1" height="1" fill="#ffffff"/><rect x="3" y="6" width="2" height="1" fill="#e8e8e8"/><rect x="5" y="6" width="2" height="1" fill="#000000"/><rect x="7" y="6" width="1" height="1" fill="#e8e8e8"/><rect x="8" y="6" width="2" height="1" fill="#000000"/><rect x="10" y="6" width="2" height="1" fill="#e8e8e8"/><rect x="12" y="6" width="1" height="1" fill="#808080"/><rect x="13" y="6" width="1" height="1" fill="#000000"/><rect x="14" y="6" width="1" height="1" fill="#00ffff"/><rect x="0" y="7" width="1" height="1" fill="#00ffff"/><rect x="1" y="7" width="1" height="1" fill="#000000"/><rect x="2" y="7" width="1" height="1" fill="#ffffff"/><rect x="3" y="7" width="2" height="1" fill="#e8e8e8"/><rect x="5" y="7" width="2" height="1" fill="#000000"/><rect x="7" y="7" width="1" height="1" fill="#e8e8e8"/><rect x="8" y="7" width="3" height="1" fill="#000000"/><rect x="11" y="7" width="1" height="1" fill="#e8e8e8"/><rect x="12" y="7" width="1" height="1" fill="#808080"/><rect x="13" y="7" width="1" height="1" fill="#000000"/><rect x="14" y="7" width="1" height="1" fill="#00ffff"/><rect x="0" y="8" width="1" height="1" fill="#00ffff"/><rect x="1" y="8" width="1" height="1" fill="#000000"/><rect x="2" y="8" width="1" height="1" fill="#ffffff"/><rect x="3" y="8" width="2" height="1" fill="#e8e8e8"/><rect x="5" y="8" width="2" height="1" fill="#000000"/><rect x="7" y="8" width="1" height="1" fill="#e8e8e8"/><rect x="8" y="8" width="2" height="1" fill="#000000"/><rect x="10" y="8" width="2" height="1" fill="#e8e8e8"/><rect x="12" y="8" width="1" height="1" fill="#808080"/><rect x="13" y="8" width="1" height="1" fill="#000000"/><rect x="14" y="8" width="1" height="1" fill="#00ffff"/><rect x="0" y="9" width="1" height="1" fill="#00ffff"/><rect x="1" y="9" width="1" height="1" fill="#000000"/><rect x="2" y="9" width="1" height="1" fill="#ffffff"/><rect x="3" y="9" width="2" height="1" fill="#e8e8e8"/><rect x="5" y="9" width="2" height="1" fill="#000000"/><rect x="7" y="9" width="1" height="1" fill="#e8e8e8"/><rect x="8" y="9" width="1" height="1" fill="#000000"/><rect x="9" y="9" width="3" height="1" fill="#e8e8e8"/><rect x="12" y="9" width="1" height="1" fill="#808080"/><rect x="13" y="9" width="1" height="1" fill="#000000"/><rect x="14" y="9" width="1" height="1" fill="#00ffff"/><rect x="0" y="10" width="1" height="1" fill="#00ffff"/><rect x="1" y="10" width="1" height="1" fill="#000000"/><rect x="2" y="10" width="1" height="1" fill="#ffffff"/><rect x="3" y="10" width="9" height="1" fill="#e8e8e8"/><rect x="12" y="10" width="1" height="1" fill="#808080"/><rect x="13" y="10" width="1" height="1" fill="#000000"/><rect x="14" y="10" width="1" height="1" fill="#00ffff"/><rect x="0" y="11" width="1" height="1" fill="#00ffff"/><rect x="1" y="11" width="1" height="1" fill="#000000"/><rect x="2" y="11" width="1" height="1" fill="#ffffff"/><rect x="3" y="11" width="9" height="1" fill="#e8e8e8"/><rect x="12" y="11" width="1" height="1" fill="#808080"/><rect x="13" y="11" width="1" height="1" fill="#000000"/><rect x="14" y="11" width="1" height="1" fill="#00ffff"/><rect x="0" y="12" width="1" height="1" fill="#00ffff"/><rect x="1" y="12" width="1" height="1" fill="#000000"/><rect x="2" y="12" width="1" height="1" fill="#ffffff"/><rect x="3" y="12" width="10" height="1" fill="#808080"/><rect x="13" y="12" width="1" height="1" fill="#000000"/><rect x="14" y="12" width="1" height="1" fill="#00ffff"/><rect x="0" y="13" width="1" height="1" fill="#00ffff"/><rect x="1" y="13" width="13" height="1" fill="#000000"/><rect x="14" y="13" width="1" height="1" fill="#00ffff"/><rect x="0" y="14" width="15" height="1" fill="#00ffff"/></svg>
<svg style="left:284px;top:58px" width="16" height="16" viewBox="0 0 16 16" shape-rendering="crispEdges"><rect x="5" y="0" width="6" height="1" fill="#ff0000"/><rect x="3" y="1" width="10" height="1" fill="#ff0000"/><rect x="2" y="2" width="4" height="1" fill="#ff0000"/><rect x="6" y="2" width="3" height="1" fill="#000000"/><rect x="9" y="2" width="1" height="1" fill="#ffffff"/><rect x="10" y="2" width="4" height="1" fill="#ff0000"/><rect x="1" y="3" width="3" height="1" fill="#ff0000"/><rect x="4" y="3" width="2" height="1" fill="#ffffff"/><rect x="6" y="3" width="3" height="1" fill="#000000"/><rect x="9" y="3" width="2" height="1" fill="#ffffff"/><rect x="11" y="3" width="4" height="1" fill="#ff0000"/><rect x="1" y="4" width="2" height="1" fill="#ff0000"/><rect x="3" y="4" width="3" height="1" fill="#ffffff"/><rect x="6" y="4" width="3" height="1" fill="#000000"/><rect x="9" y="4" width="1" height="1" fill="#ffffff"/><rect x="10" y="4" width="5" height="1" fill="#ff0000"/><rect x="0" y="5" width="3" height="1" fill="#ff0000"/><rect x="3" y="5" width="3" height="1" fill="#ffffff"/><rect x="6" y="5" width="3" height="1" fill="#000000"/><rect x="9" y="5" width="3" height="1" fill="#ff0000"/><rect x="12" y="5" width="1" height="1" fill="#ffffff"/><rect x="13" y="5" width="3" height="1" fill="#ff0000"/><rect x="0" y="6" width="2" height="1" fill="#ff0000"/><rect x="2" y="6" width="5" height="1" fill="#ffffff"/><rect x="7" y="6" width="2" height="1" fill="#000000"/><rect x="9" y="6" width="2" height="1" fill="#ff0000"/><rect x="11" y="6" width="3" height="1" fill="#ffffff"/><rect x="14" y="6" width="2" height="1" fill="#ff0000"/><rect x="0" y="7" width="2" height="1" fill="#ff0000"/><rect x="2" y="7" width="5" height="1" fill="#ffffff"/><rect x="7" y="7" width="2" height="1" fill="#000000"/><rect x="9" y="7" width="1" height="1" fill="#ff0000"/><rect x="10" y="7" width="4" height="1" fill="#ffffff"/><rect x="14" y="7" width="2" height="1" fill="#ff0000"/><rect x="0" y="8" width="2" height="1" fill="#ff0000"/><rect x="2" y="8" width="4" height="1" fill="#ffffff"/><rect x="6" y="8" width="1" height="1" fill="#ff0000"/><rect x="7" y="8" width="2" height="1" fill="#000000"/><rect x="9" y="8" width="5" height="1" fill="#ffffff"/><rect x="14" y="8" width="2" height="1" fill="#ff0000"/><rect x="0" y="9" width="2" height="1" fill="#ff0000"/><rect x="2" y="9" width="3" height="1" fill="#ffffff"/><rect x="5" y="9" width="3" height="1" fill="#ff0000"/><rect x="8" y="9" width="6" height="1" fill="#ffffff"/><rect x="14" y="9" width="2" height="1" fill="#ff0000"/><rect x="0" y="10" width="3" height="1" fill="#ff0000"/><rect x="3" y="10" width="1" height="1" fill="#ffffff"/><rect x="4" y="10" width="3" height="1" fill="#ff0000"/><rect x="7" y="10" width="2" height="1" fill="#000000"/><rect x="9" y="10" width="4" height="1" fill="#ffffff"/><rect x="13" y="10" width="3" height="1" fill="#ff0000"/><rect x="1" y="11" width="5" height="1" fill="#ff0000"/><rect x="6" y="11" width="3" height="1" fill="#000000"/><rect x="9" y="11" width="4" height="1" fill="#ffffff"/><rect x="13" y="11" width="2" height="1" fill="#ff0000"/><rect x="1" y="12" width="4" height="1" fill="#ff0000"/><rect x="5" y="12" width="2" height="1" fill="#ffffff"/><rect x="7" y="12" width="2" height="1" fill="#000000"/><rect x="9" y="12" width="3" height="1" fill="#ffffff"/><rect x="12" y="12" width="3" height="1" fill="#ff0000"/><rect x="2" y="13" width="4" height="1" fill="#ff0000"/><rect x="6" y="13" width="4" height="1" fill="#ffffff"/><rect x="10" y="13" width="4" height="1" fill="#ff0000"/><rect x="3" y="14" width="10" height="1" fill="#ff0000"/><rect x="5" y="15" width="6" height="1" fill="#ff0000"/></svg>
<svg style="left:372px;top:58px" width="17" height="14" viewBox="0 0 17 14" shape-rendering="crispEdges"><rect x="15" y="0" width="1" height="1" fill="#000000"/><rect x="13" y="1" width="2" height="1" fill="#ff0000"/><rect x="15" y="1" width="1" height="1" fill="#000000"/><rect x="12" y="2" width="2" height="1" fill="#ff0000"/><rect x="14" y="2" width="1" height="1" fill="#000000"/><rect x="11" y="3" width="2" height="1" fill="#ff0000"/><rect x="13" y="3" width="1" height="1" fill="#000000"/><rect x="10" y="4" width="2" height="1" fill="#ff0000"/><rect x="12" y="4" width="1" height="1" fill="#000000"/><rect x="9" y="5" width="2" height="1" fill="#ff0000"/><rect x="11" y="5" width="1" height="1" fill="#000000"/><rect x="8" y="6" width="2" height="1" fill="#ff0000"/><rect x="10" y="6" width="1" height="1" fill="#000000"/><rect x="0" y="7" width="1" height="1" fill="#000000"/><rect x="1" y="7" width="1" height="1" fill="#ff0000"/><rect x="2" y="7" width="1" height="1" fill="#000000"/><rect x="7" y="7" width="3" height="1" fill="#ff0000"/><rect x="10" y="7" width="1" height="1" fill="#000000"/><rect x="1" y="8" width="1" height="1" fill="#000000"/><rect x="2" y="8" width="1" height="1" fill="#ff0000"/><rect x="3" y="8" width="1" height="1" fill="#000000"/><rect x="6" y="8" width="3" height="1" fill="#ff0000"/><rect x="9" y="8" width="1" height="1" fill="#000000"/><rect x="2" y="9" width="1" height="1" fill="#000000"/><rect x="3" y="9" width="5" height="1" fill="#ff0000"/><rect x="8" y="9" width="1" height="1" fill="#000000"/><rect x="2" y="10" width="1" height="1" fill="#000000"/><rect x="3" y="10" width="5" height="1" fill="#ff0000"/><rect x="8" y="10" width="1" height="1" fill="#000000"/><rect x="3" y="11" width="4" height="1" fill="#ff0000"/><rect x="7" y="11" width="1" height="1" fill="#000000"/><rect x="3" y="12" width="1" height="1" fill="#000000"/><rect x="4" y="12" width="2" height="1" fill="#ff0000"/><rect x="6" y="12" width="1" height="1" fill="#000000"/><rect x="4" y="13" width="2" height="1" fill="#000000"/></svg>
<svg style="left:590px;top:54px" width="20" height="20" viewBox="0 0 20 20" shape-rendering="crispEdges"><rect x="17" y="5" width="3" height="1" fill="#000000"/><rect x="17" y="6" width="3" height="1" fill="#000000"/><rect x="18" y="8" width="2" height="1" fill="#000000"/><rect x="7" y="9" width="3" height="1" fill="#000000"/><rect x="18" y="9" width="2" height="1" fill="#000000"/><rect x="3" y="10" width="4" height="1" fill="#000000"/><rect x="7" y="10" width="3" height="1" fill="#ffff00"/><rect x="10" y="10" width="1" height="1" fill="#000000"/><rect x="3" y="11" width="1" height="1" fill="#000000"/><rect x="4" y="11" width="1" height="1" fill="#00ffff"/><rect x="5" y="11" width="1" height="1" fill="#ffff00"/><rect x="6" y="11" width="1" height="1" fill="#ffffff"/><rect x="7" y="11" width="1" height="1" fill="#ffff00"/><rect x="8" y="11" width="1" height="1" fill="#ffffff"/><rect x="9" y="11" width="1" height="1" fill="#ffff00"/><rect x="10" y="11" width="7" height="1" fill="#000000"/><rect x="18" y="11" width="2" height="1" fill="#ff0000"/><rect x="3" y="12" width="1" height="1" fill="#000000"/><rect x="4" y="12" width="1" height="1" fill="#00ffff"/><rect x="5" y="12" width="1" height="1" fill="#ffff00"/><rect x="6" y="12" width="1" height="1" fill="#ffffff"/><rect x="7" y="12" width="1" height="1" fill="#ffff00"/><rect x="8" y="12" width="1" height="1" fill="#ffffff"/><rect x="9" y="12" width="2" height="1" fill="#ffff00"/><rect x="11" y="12" width="1" height="1" fill="#ffffff"/><rect x="12" y="12" width="1" height="1" fill="#ffff00"/><rect x="13" y="12" width="1" height="1" fill="#ffffff"/><rect x="14" y="12" width="1" height="1" fill="#ffff00"/><rect x="15" y="12" width="1" height="1" fill="#ffffff"/><rect x="16" y="12" width="1" height="1" fill="#000000"/><rect x="18" y="12" width="2" height="1" fill="#ff0000"/><rect x="3" y="13" width="1" height="1" fill="#000000"/><rect x="4" y="13" width="1" height="1" fill="#00ffff"/><rect x="5" y="13" width="2" height="1" fill="#ffff00"/><rect x="7" y="13" width="1" height="1" fill="#ffffff"/><rect x="8" y="13" width="1" height="1" fill="#ffff00"/><rect x="9" y="13" width="1" height="1" fill="#ffffff"/><rect x="10" y="13" width="7" height="1" fill="#000000"/><rect x="3" y="14" width="1" height="1" fill="#000000"/><rect x="4" y="14" width="1" height="1" fill="#00ffff"/><rect x="5" y="14" width="1" height="1" fill="#ffff00"/><rect x="6" y="14" width="1" height="1" fill="#ffffff"/><rect x="7" y="14" width="1" height="1" fill="#ffff00"/><rect x="8" y="14" width="1" height="1" fill="#ffffff"/><rect x="9" y="14" width="1" height="1" fill="#ffff00"/><rect x="10" y="14" width="1" height="1" fill="#ffffff"/><rect x="11" y="14" width="1" height="1" fill="#ffff00"/><rect x="12" y="14" width="1" height="1" fill="#ffffff"/><rect x="13" y="14" width="1" height="1" fill="#000000"/><rect x="18" y="14" width="2" height="1" fill="#000000"/><rect x="3" y="15" width="1" height="1" fill="#000000"/><rect x="4" y="15" width="1" height="1" fill="#00ffff"/><rect x="5" y="15" width="2" height="1" fill="#ffff00"/><rect x="7" y="15" width="1" height="1" fill="#ffffff"/><rect x="8" y="15" width="1" height="1" fill="#ffff00"/><rect x="9" y="15" width="1" height="1" fill="#ffffff"/><rect x="10" y="15" width="4" height="1" fill="#000000"/><rect x="18" y="15" width="2" height="1" fill="#000000"/><rect x="3" y="16" width="1" height="1" fill="#000000"/><rect x="4" y="16" width="1" height="1" fill="#00ffff"/><rect x="5" y="16" width="1" height="1" fill="#ffff00"/><rect x="6" y="16" width="1" height="1" fill="#ffffff"/><rect x="7" y="16" width="1" height="1" fill="#ffff00"/><rect x="8" y="16" width="1" height="1" fill="#ffffff"/><rect x="9" y="16" width="1" height="1" fill="#ffff00"/><rect x="10" y="16" width="1" height="1" fill="#ffffff"/><rect x="11" y="16" width="1" height="1" fill="#000000"/><rect x="3" y="17" width="9" height="1" fill="#000000"/><rect x="17" y="17" width="3" height="1" fill="#000000"/><rect x="17" y="18" width="3" height="1" fill="#000000"/></svg>
<svg style="left:626px;top:58px" width="17" height="17" viewBox="0 0 17 17" shape-rendering="crispEdges"><rect x="1" y="1" width="5" height="1" fill="#000000"/><rect x="9" y="1" width="4" height="1" fill="#000000"/><rect x="15" y="1" width="2" height="1" fill="#ffffff"/><rect x="1" y="2" width="1" height="1" fill="#000000"/><rect x="2" y="2" width="3" height="1" fill="#00ffff"/><rect x="5" y="2" width="1" height="1" fill="#000000"/><rect x="9" y="2" width="2" height="1" fill="#ffffff"/><rect x="11" y="2" width="3" height="1" fill="#000000"/><rect x="14" y="2" width="3" height="1" fill="#ffffff"/><rect x="1" y="3" width="1" height="1" fill="#000000"/><rect x="2" y="3" width="3" height="1" fill="#00ffff"/><rect x="5" y="3" width="1" height="1" fill="#000000"/><rect x="11" y="3" width="3" height="1" fill="#000000"/><rect x="14" y="3" width="3" height="1" fill="#ffffff"/><rect x="1" y="4" width="1" height="1" fill="#000000"/><rect x="2" y="4" width="3" height="1" fill="#00ffff"/><rect x="5" y="4" width="1" height="1" fill="#000000"/><rect x="11" y="4" width="3" height="1" fill="#000000"/><rect x="14" y="4" width="3" height="1" fill="#ffffff"/><rect x="1" y="5" width="5" height="1" fill="#000000"/><rect x="9" y="5" width="8" height="1" fill="#000000"/><rect x="10" y="6" width="6" height="1" fill="#000000"/><rect x="16" y="6" width="1" height="1" fill="#ffffff"/><rect x="9" y="7" width="2" height="1" fill="#ffffff"/><rect x="11" y="7" width="4" height="1" fill="#000000"/><rect x="15" y="7" width="2" height="1" fill="#ffffff"/><rect x="8" y="8" width="4" height="1" fill="#ffffff"/><rect x="12" y="8" width="2" height="1" fill="#000000"/><rect x="14" y="8" width="3" height="1" fill="#ffffff"/><rect x="7" y="9" width="10" height="1" fill="#ffffff"/><rect x="6" y="10" width="4" height="1" fill="#ffffff"/><rect x="10" y="10" width="5" height="1" fill="#000000"/><rect x="15" y="10" width="2" height="1" fill="#ffffff"/><rect x="5" y="11" width="5" height="1" fill="#ffffff"/><rect x="10" y="11" width="1" height="1" fill="#000000"/><rect x="11" y="11" width="3" height="1" fill="#ff0000"/><rect x="14" y="11" width="1" height="1" fill="#000000"/><rect x="15" y="11" width="2" height="1" fill="#ffffff"/><rect x="4" y="12" width="6" height="1" fill="#ffffff"/><rect x="10" y="12" width="1" height="1" fill="#000000"/><rect x="11" y="12" width="3" height="1" fill="#ff0000"/><rect x="14" y="12" width="1" height="1" fill="#000000"/><rect x="15" y="12" width="2" height="1" fill="#ffffff"/><rect x="3" y="13" width="7" height="1" fill="#ffffff"/><rect x="10" y="13" width="1" height="1" fill="#000000"/><rect x="11" y="13" width="3" height="1" fill="#ff0000"/><rect x="14" y="13" width="1" height="1" fill="#000000"/><rect x="15" y="13" width="2" height="1" fill="#ffffff"/><rect x="2" y="14" width="8" height="1" fill="#ffffff"/><rect x="10" y="14" width="5" height="1" fill="#000000"/><rect x="15" y="14" width="2" height="1" fill="#ffffff"/><rect x="1" y="15" width="16" height="1" fill="#ffffff"/></svg>
<svg style="left:9px;top:6px" width="16" height="16" viewBox="0 0 16 16" shape-rendering="crispEdges"><rect x="0" y="0" width="1" height="1" fill="#7a6a4a"/><rect x="1" y="0" width="1" height="1" fill="#a8b878"/><rect x="2" y="0" width="1" height="1" fill="#c8b888"/><rect x="3" y="0" width="2" height="1" fill="#e4e0c8"/><rect x="5" y="0" width="1" height="1" fill="#a8b878"/><rect x="6" y="0" width="2" height="1" fill="#c8b888"/><rect x="8" y="0" width="2" height="1" fill="#a8b878"/><rect x="10" y="0" width="1" height="1" fill="#c8b888"/><rect x="11" y="0" width="2" height="1" fill="#e4e0c8"/><rect x="13" y="0" width="1" height="1" fill="#c8b888"/><rect x="14" y="0" width="1" height="1" fill="#a8b878"/><rect x="15" y="0" width="1" height="1" fill="#7a6a4a"/><rect x="0" y="1" width="1" height="1" fill="#7a6a4a"/><rect x="1" y="1" width="1" height="1" fill="#c8b888"/><rect x="2" y="1" width="2" height="1" fill="#a8b878"/><rect x="4" y="1" width="2" height="1" fill="#c8b888"/><rect x="6" y="1" width="1" height="1" fill="#000000"/><rect x="7" y="1" width="1" height="1" fill="#a8b878"/><rect x="8" y="1" width="1" height="1" fill="#c8b888"/><rect x="9" y="1" width="1" height="1" fill="#e4e0c8"/><rect x="10" y="1" width="2" height="1" fill="#a8b878"/><rect x="12" y="1" width="1" height="1" fill="#c8b888"/><rect x="13" y="1" width="2" height="1" fill="#a8b878"/><rect x="15" y="1" width="1" height="1" fill="#7a6a4a"/><rect x="0" y="2" width="1" height="1" fill="#7a6a4a"/><rect x="1" y="2" width="1" height="1" fill="#c8b888"/><rect x="2" y="2" width="1" height="1" fill="#a8b878"/><rect x="3" y="2" width="1" height="1" fill="#000000"/><rect x="4" y="2" width="1" height="1" fill="#a8b878"/><rect x="5" y="2" width="1" height="1" fill="#c8b888"/><rect x="6" y="2" width="2" height="1" fill="#000000"/><rect x="8" y="2" width="1" height="1" fill="#c8b888"/><rect x="9" y="2" width="1" height="1" fill="#a8b878"/><rect x="10" y="2" width="1" height="1" fill="#e4e0c8"/><rect x="11" y="2" width="1" height="1" fill="#a8b878"/><rect x="12" y="2" width="1" height="1" fill="#c8b888"/><rect x="13" y="2" width="1" height="1" fill="#a8b878"/><rect x="14" y="2" width="1" height="1" fill="#e4e0c8"/><rect x="15" y="2" width="1" height="1" fill="#7a6a4a"/><rect x="0" y="3" width="1" height="1" fill="#7a6a4a"/><rect x="1" y="3" width="1" height="1" fill="#e4e0c8"/><rect x="2" y="3" width="3" height="1" fill="#000000"/><rect x="5" y="3" width="1" height="1" fill="#a8b878"/><rect x="6" y="3" width="3" height="1" fill="#000000"/><rect x="9" y="3" width="2" height="1" fill="#a8b878"/><rect x="11" y="3" width="1" height="1" fill="#e4e0c8"/><rect x="12" y="3" width="2" height="1" fill="#a8b878"/><rect x="14" y="3" width="1" height="1" fill="#c8b888"/><rect x="15" y="3" width="1" height="1" fill="#7a6a4a"/><rect x="0" y="4" width="1" height="1" fill="#7a6a4a"/><rect x="1" y="4" width="1" height="1" fill="#c8b888"/><rect x="2" y="4" width="2" height="1" fill="#000000"/><rect x="4" y="4" width="1" height="1" fill="#6a7a48"/><rect x="5" y="4" width="1" height="1" fill="#a8b878"/><rect x="6" y="4" width="2" height="1" fill="#000000"/><rect x="8" y="4" width="1" height="1" fill="#a8b878"/><rect x="9" y="4" width="1" height="1" fill="#c8b888"/><rect x="10" y="4" width="1" height="1" fill="#e4e0c8"/><rect x="11" y="4" width="1" height="1" fill="#a8b878"/><rect x="12" y="4" width="1" height="1" fill="#6a7a48"/><rect x="13" y="4" width="1" height="1" fill="#000000"/><rect x="14" y="4" width="1" height="1" fill="#a8b878"/><rect x="15" y="4" width="1" height="1" fill="#7a6a4a"/><rect x="0" y="5" width="1" height="1" fill="#7a6a4a"/><rect x="1" y="5" width="1" height="1" fill="#a8b878"/><rect x="2" y="5" width="1" height="1" fill="#c8b888"/><rect x="3" y="5" width="1" height="1" fill="#000000"/><rect x="4" y="5" width="1" height="1" fill="#a8b878"/><rect x="5" y="5" width="1" height="1" fill="#c8b888"/><rect x="6" y="5" width="1" height="1" fill="#a8b878"/><rect x="7" y="5" width="1" height="1" fill="#000000"/><rect x="8" y="5" width="1" height="1" fill="#a8b878"/><rect x="9" y="5" width="2" height="1" fill="#000000"/><rect x="11" y="5" width="1" height="1" fill="#a8b878"/><rect x="12" y="5" width="1" height="1" fill="#c8b888"/><rect x="13" y="5" width="2" height="1" fill="#000000"/><rect x="15" y="5" width="1" height="1" fill="#7a6a4a"/><rect x="0" y="6" width="1" height="1" fill="#7a6a4a"/><rect x="1" y="6" width="1" height="1" fill="#4a3a24"/><rect x="2" y="6" width="13" height="1" fill="#000000"/><rect x="15" y="6" width="1" height="1" fill="#7a6a4a"/><rect x="0" y="7" width="1" height="1" fill="#7a6a4a"/><rect x="1" y="7" width="1" height="1" fill="#c8b888"/><rect x="2" y="7" width="1" height="1" fill="#a8b878"/><rect x="3" y="7" width="1" height="1" fill="#000000"/><rect x="4" y="7" width="1" height="1" fill="#e4e0c8"/><rect x="5" y="7" width="1" height="1" fill="#4a3a24"/><rect x="6" y="7" width="1" height="1" fill="#000000"/><rect x="7" y="7" width="1" height="1" fill="#a8b878"/><rect x="8" y="7" width="1" height="1" fill="#6a7a48"/><rect x="9" y="7" width="1" height="1" fill="#4a3a24"/><rect x="10" y="7" width="2" height="1" fill="#000000"/><rect x="12" y="7" width="1" height="1" fill="#a8b878"/><rect x="13" y="7" width="2" height="1" fill="#000000"/><rect x="15" y="7" width="1" height="1" fill="#7a6a4a"/><rect x="0" y="8" width="1" height="1" fill="#7a6a4a"/><rect x="1" y="8" width="1" height="1" fill="#000000"/><rect x="2" y="8" width="3" height="1" fill="#a8b878"/><rect x="5" y="8" width="2" height="1" fill="#000000"/><rect x="7" y="8" width="2" height="1" fill="#a8b878"/><rect x="9" y="8" width="1" height="1" fill="#000000"/><rect x="10" y="8" width="2" height="1" fill="#a8b878"/><rect x="12" y="8" width="1" height="1" fill="#000000"/><rect x="13" y="8" width="1" height="1" fill="#a8b878"/><rect x="14" y="8" width="1" height="1" fill="#4a3a24"/><rect x="15" y="8" width="1" height="1" fill="#7a6a4a"/><rect x="0" y="9" width="1" height="1" fill="#7a6a4a"/><rect x="1" y="9" width="1" height="1" fill="#c8b888"/><rect x="2" y="9" width="1" height="1" fill="#a8b878"/><rect x="3" y="9" width="12" height="1" fill="#000000"/><rect x="15" y="9" width="1" height="1" fill="#7a6a4a"/><rect x="0" y="10" width="1" height="1" fill="#7a6a4a"/><rect x="1" y="10" width="1" height="1" fill="#4a3a24"/><rect x="2" y="10" width="1" height="1" fill="#ffffff"/><rect x="3" y="10" width="1" height="1" fill="#000000"/><rect x="4" y="10" width="2" height="1" fill="#ffffff"/><rect x="6" y="10" width="1" height="1" fill="#000000"/><rect x="7" y="10" width="2" height="1" fill="#ffffff"/><rect x="9" y="10" width="1" height="1" fill="#000000"/><rect x="10" y="10" width="1" height="1" fill="#ffffff"/><rect x="11" y="10" width="1" height="1" fill="#000000"/><rect x="12" y="10" width="3" height="1" fill="#ffffff"/><rect x="15" y="10" width="1" height="1" fill="#7a6a4a"/><rect x="0" y="11" width="1" height="1" fill="#7a6a4a"/><rect x="1" y="11" width="1" height="1" fill="#4a3a24"/><rect x="2" y="11" width="4" height="1" fill="#ffffff"/><rect x="6" y="11" width="1" height="1" fill="#000000"/><rect x="7" y="11" width="4" height="1" fill="#ffffff"/><rect x="11" y="11" width="2" height="1" fill="#000000"/><rect x="13" y="11" width="1" height="1" fill="#ffffff"/><rect x="14" y="11" width="1" height="1" fill="#4a3a24"/><rect x="15" y="11" width="1" height="1" fill="#7a6a4a"/><rect x="0" y="12" width="1" height="1" fill="#7a6a4a"/><rect x="1" y="12" width="1" height="1" fill="#c8b888"/><rect x="2" y="12" width="4" height="1" fill="#ffffff"/><rect x="6" y="12" width="1" height="1" fill="#000000"/><rect x="7" y="12" width="4" height="1" fill="#ffffff"/><rect x="11" y="12" width="2" height="1" fill="#000000"/><rect x="13" y="12" width="1" height="1" fill="#ffffff"/><rect x="14" y="12" width="1" height="1" fill="#000000"/><rect x="15" y="12" width="1" height="1" fill="#7a6a4a"/><rect x="0" y="13" width="1" height="1" fill="#7a6a4a"/><rect x="1" y="13" width="1" height="1" fill="#4a3a24"/><rect x="2" y="13" width="1" height="1" fill="#ffffff"/><rect x="3" y="13" width="1" height="1" fill="#000000"/><rect x="4" y="13" width="2" height="1" fill="#ffffff"/><rect x="6" y="13" width="1" height="1" fill="#000000"/><rect x="7" y="13" width="1" height="1" fill="#ffffff"/><rect x="8" y="13" width="1" height="1" fill="#000000"/><rect x="9" y="13" width="2" height="1" fill="#ffffff"/><rect x="11" y="13" width="2" height="1" fill="#000000"/><rect x="13" y="13" width="1" height="1" fill="#ffffff"/><rect x="14" y="13" width="1" height="1" fill="#000000"/><rect x="15" y="13" width="1" height="1" fill="#7a6a4a"/><rect x="0" y="14" width="1" height="1" fill="#7a6a4a"/><rect x="1" y="14" width="1" height="1" fill="#4a3a24"/><rect x="2" y="14" width="1" height="1" fill="#ffffff"/><rect x="3" y="14" width="1" height="1" fill="#000000"/><rect x="4" y="14" width="2" height="1" fill="#ffffff"/><rect x="6" y="14" width="1" height="1" fill="#000000"/><rect x="7" y="14" width="1" height="1" fill="#ffffff"/><rect x="8" y="14" width="1" height="1" fill="#000000"/><rect x="9" y="14" width="2" height="1" fill="#ffffff"/><rect x="11" y="14" width="2" height="1" fill="#000000"/><rect x="13" y="14" width="1" height="1" fill="#ffffff"/><rect x="14" y="14" width="1" height="1" fill="#000000"/><rect x="15" y="14" width="1" height="1" fill="#7a6a4a"/><rect x="0" y="15" width="1" height="1" fill="#7a6a4a"/><rect x="1" y="15" width="14" height="1" fill="#4a3a24"/><rect x="15" y="15" width="1" height="1" fill="#7a6a4a"/></svg>
<span class="t" style="left:29.00px;top:5px;letter-spacing:-0.09px;">Mobhack for WinMBT : - obat12 - USA</span>
<span class="t" style="left:7.50px;top:30px;letter-spacing:-0.43px;">File</span>
<span class="t" style="left:39.70px;top:30px;letter-spacing:-0.37px;">Help</span>
<span class="t" style="left:424.50px;top:56px;letter-spacing:0.12px;">Find:</span>
<span class="t" style="left:8.30px;top:83px;letter-spacing:0.42px;">Units</span>
<span class="t" style="left:51.40px;top:83px;letter-spacing:0.28px;">Weapons</span>
<span class="t" style="left:115.20px;top:81px;letter-spacing:0.30px;">Formations</span>
<span class="t" style="left:190.50px;top:83px;letter-spacing:-0.03px;">Info</span>
<span class="t" style="left:232.70px;top:83px;letter-spacing:0.04px;">Load/Save</span>
<span class="t" style="left:11.40px;top:108px;">895</span>
<span class="t" style="left:37.50px;top:108px;">HBCT Rec Trp HQ</span>
<span class="t" style="left:11.40px;top:123px;">896</span>
<span class="t" style="left:37.50px;top:123px;">HBCT Rec Sec 1</span>
<span class="t" style="left:11.40px;top:138px;">897</span>
<span class="t" style="left:37.50px;top:138px;">HBCT Rec Sec 2</span>
<span class="t" style="left:11.40px;top:153px;">898</span>
<span class="t" style="left:37.50px;top:153px;">Hbct Rec Mortar</span>
<span class="t" style="left:11.40px;top:168px;">899</span>
<span class="t" style="left:11.40px;top:183px;">900</span>
<span class="t" style="left:37.50px;top:183px;">IBCT Rifle Plt.</span>
<span class="t" style="left:11.40px;top:198px;">901</span>
<span class="t" style="left:37.50px;top:198px;">IBCT Rifle Co.</span>
<span class="t" style="left:11.40px;top:213px;">902</span>
<span class="t" style="left:11.40px;top:228px;">903</span>
<span class="t" style="left:11.40px;top:243px;">904</span>
<span class="t" style="left:11.40px;top:258px;">905</span>
<span class="t" style="left:37.50px;top:258px;">Rifle Plt (FT)</span>
<span class="t" style="left:11.40px;top:273px;">906</span>
<span class="t" style="left:37.50px;top:273px;">Rifle Sqd (FT)</span>
<span class="t" style="left:11.40px;top:288px;">907</span>
<span class="t" style="left:38.50px;top:288px;">Wpn Sqd</span>
<span class="t" style="left:11.40px;top:303px;">908</span>
<span class="t" style="left:11.40px;top:318px;">909</span>
<span class="t" style="left:11.40px;top:333px;">910</span>
<span class="t" style="left:37.50px;top:333px;">Buddy TM Sqd</span>
<span class="t" style="left:11.40px;top:348px;">911</span>
<span class="t w" style="left:11.40px;top:363px;">912</span>
<span class="t w" style="left:37.50px;top:363px;">FT Plt</span>
<span class="t" style="left:11.40px;top:378px;">913</span>
<span class="t" style="left:11.40px;top:393px;">914</span>
<span class="t" style="left:11.40px;top:408px;">915</span>
<span class="t" style="left:11.40px;top:423px;">916</span>
<span class="t" style="left:11.40px;top:438px;">917</span>
<span class="t" style="left:11.40px;top:453px;">918</span>
<span class="t" style="left:11.40px;top:468px;">919</span>
<span class="t" style="left:11.40px;top:483px;">920</span>
<span class="t" style="left:11.40px;top:498px;">921</span>
<span class="t" style="left:11.40px;top:513px;">922</span>
<span class="t" style="left:11.40px;top:528px;">923</span>
<span class="t" style="left:11.40px;top:543px;">924</span>
<span class="t" style="left:11.40px;top:558px;">925</span>
<span class="t" style="left:11.40px;top:573px;">926</span>
<span class="t" style="left:11.40px;top:588px;">927</span>
<span class="t" style="left:11.40px;top:603px;">928</span>
<span class="b" style="left:180.70px;top:122px;letter-spacing:-0.07px;">Formation 912</span>
<span class="b" style="left:181.50px;top:146px;letter-spacing:-0.15px;">Available from</span>
<span class="b" style="left:233.00px;top:170px;letter-spacing:-0.25px;">Until</span>
<span class="b" style="left:333.50px;top:159px;letter-spacing:-1.50px;">of</span>
<span class="b" style="left:437.40px;top:122px;letter-spacing:-0.46px;">Nation</span>
<span class="b" style="left:437.40px;top:146px;letter-spacing:0.06px;">Purchase screen</span>
<span class="b" style="left:437.40px;top:170px;letter-spacing:-0.29px;">Formation Type</span>
<span class="b" style="left:605.00px;top:122px;letter-spacing:-0.70px;">USA</span>
<span class="b" style="left:604.90px;top:146px;letter-spacing:-0.16px;">Infantry</span>
<span class="b" style="left:605.00px;top:170px;letter-spacing:-0.30px;">Combat Group</span>
<span class="t" style="left:288.00px;top:123px;">FT Plt</span>
<span class="t" style="left:288.00px;top:147px;">1</span>
<span class="t" style="left:368.60px;top:147px;">85</span>
<span class="t" style="left:288.00px;top:171px;">12</span>
<span class="t" style="left:367.60px;top:171px;">125</span>
<span class="t" style="left:543.80px;top:123px;">12</span>
<span class="t" style="left:544.80px;top:147px;">3</span>
<span class="t" style="left:544.80px;top:171px;">3</span>
<span class="b" style="left:178.20px;top:202px;letter-spacing:-0.15px;">Combat Group (is allowed sub-formations of sections only)</span>
<span class="b" style="left:324.80px;top:232px;">U</span>
<span class="b" style="left:333.10px;top:232px;">/</span>
<span class="b" style="left:335.90px;top:232px;">F</span>
<span class="b" style="left:525.80px;top:232px;letter-spacing:-0.37px;">Availability</span>
<span class="b" style="left:620.90px;top:232px;letter-spacing:-0.27px;">Formation Type</span>
<span class="b" style="left:181.20px;top:258px;">Unit 1</span>
<span class="t" style="left:288.40px;top:259px;">410</span>
<span class="b" style="left:357.40px;top:258px;letter-spacing:-0.29px;">Rifle Squad</span>
<span class="b" style="left:637.10px;top:258px;letter-spacing:-0.40px;">unit</span>
<span class="b" style="left:181.20px;top:282px;letter-spacing:-0.23px;">Unit/Formation 2</span>
<span class="t" style="left:287.40px;top:283px;letter-spacing:0.40px;">1910</span>
<span class="b" style="left:357.40px;top:282px;letter-spacing:-0.45px;">Buddy TM Sqd</span>
<span class="b" style="left:525.60px;top:282px;">1/85 to 12/125</span>
<span class="b" style="left:638.10px;top:282px;letter-spacing:-0.30px;">Section</span>
<span class="b" style="left:181.20px;top:306px;letter-spacing:-0.23px;">Unit/Formation 3</span>
<span class="t" style="left:287.40px;top:307px;letter-spacing:0.40px;">1910</span>
<span class="b" style="left:357.40px;top:306px;letter-spacing:-0.45px;">Buddy TM Sqd</span>
<span class="b" style="left:525.60px;top:306px;">1/85 to 12/125</span>
<span class="b" style="left:638.10px;top:306px;letter-spacing:-0.30px;">Section</span>
<span class="b" style="left:181.20px;top:330px;letter-spacing:-0.30px;">Unit/Formation 4</span>
<span class="t" style="left:287.40px;top:331px;letter-spacing:0.40px;">1910</span>
<span class="b" style="left:357.40px;top:330px;letter-spacing:-0.45px;">Buddy TM Sqd</span>
<span class="b" style="left:525.60px;top:330px;">1/85 to 12/125</span>
<span class="b" style="left:638.10px;top:330px;letter-spacing:-0.30px;">Section</span>
<span class="b" style="left:181.20px;top:354px;letter-spacing:-0.23px;">Unit/Formation 5</span>
<span class="t" style="left:287.40px;top:355px;">1907</span>
<span class="b" style="left:358.40px;top:354px;letter-spacing:-0.47px;">Wpn Sqd</span>
<span class="b" style="left:525.60px;top:354px;">1/85 to 12/125</span>
<span class="b" style="left:638.10px;top:354px;letter-spacing:-0.30px;">Section</span>
<span class="b" style="left:181.20px;top:378px;letter-spacing:-0.23px;">Unit/Formation 6</span>
<span class="t" style="left:288.40px;top:379px;">0</span>
<span class="b" style="left:637.10px;top:378px;letter-spacing:-0.40px;">unit</span>
<span class="b" style="left:181.20px;top:402px;letter-spacing:-0.23px;">Unit/Formation 7</span>
<span class="t" style="left:288.40px;top:403px;">0</span>
<span class="b" style="left:637.10px;top:402px;letter-spacing:-0.40px;">unit</span>
<span class="b" style="left:181.20px;top:426px;letter-spacing:-0.23px;">Unit/Formation 8</span>
<span class="t" style="left:288.40px;top:427px;">0</span>
<span class="b" style="left:637.10px;top:426px;letter-spacing:-0.40px;">unit</span>
<span class="b" style="left:181.20px;top:450px;letter-spacing:-0.23px;">Unit/Formation 9</span>
<span class="t" style="left:288.40px;top:451px;">0</span>
<span class="b" style="left:637.10px;top:450px;letter-spacing:-0.40px;">unit</span>
<span class="b" style="left:181.20px;top:474px;letter-spacing:-0.22px;">Unit/Formation 10</span>
<span class="t" style="left:288.40px;top:475px;">0</span>
<span class="b" style="left:637.10px;top:474px;letter-spacing:-0.40px;">unit</span>
<span class="b" style="left:282.40px;top:512px;letter-spacing:-0.28px;">Total units :</span>
<span class="b" style="left:282.40px;top:528px;letter-spacing:-0.12px;">Template men :</span>
<span class="t" style="left:381.30px;top:512px;">17</span>
<span class="t" style="left:381.30px;top:528px;letter-spacing:-0.40px;">127</span>
<span class="b" style="left:437.20px;top:512px;letter-spacing:-0.11px;">Experience Modifier</span>
<span class="t" style="left:561.50px;top:511px;">0</span>
<span class="b" style="left:606.60px;top:512px;letter-spacing:-0.10px;">Morale Modifier</span>
<span class="t" style="left:702.50px;top:511px;">0</span>
<span class="b" style="left:572.90px;top:546px;letter-spacing:-0.11px;">Encyclopaedia Text</span>
<span class="b k" style="left:699.40px;top:547px;letter-spacing:-0.02px;">Create</span>
<span class="t s" style="left:164.50px;top:559px;letter-spacing:-0.13px;">NB - Year Fields index 0=&gt;1900 50=&gt;1950 100=&gt;2000 120=&gt;2020</span>
<span class="t st" style="left:2.10px;top:630px;letter-spacing:0.04px;">Loaded C:\SHRAPNEL GAMES\THE CAMO WORKSHOP\WINSPMBT\game data\oobs\Custom OOBS\Fire TM Buddy\obat12 -</span>
</div></body></html>
